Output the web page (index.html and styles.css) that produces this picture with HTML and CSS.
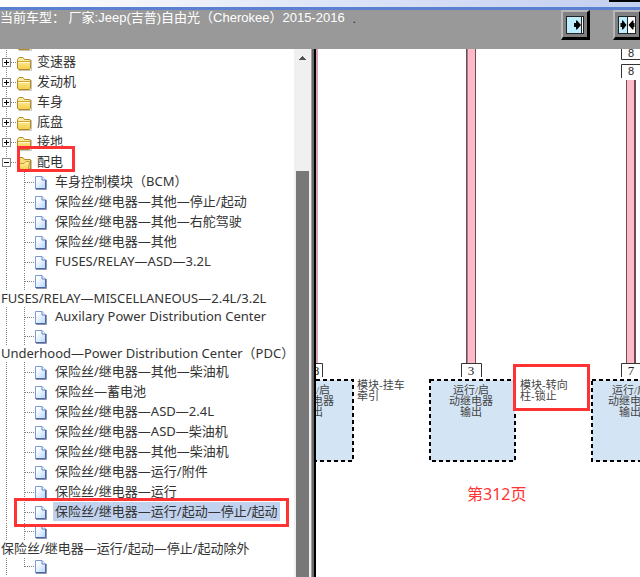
FILE: index.html
```html
<!DOCTYPE html>
<html lang="zh-CN">
<head>
<meta charset="utf-8">
<meta name="viewport" content="width=device-width, initial-scale=1">
<title>Jeep 自由光 电路图</title>
<link rel="stylesheet" href="styles.css">
</head>
<body>
<svg class="defs" aria-hidden="true">
  <defs>
    <linearGradient id="fold" x1="0" y1="0" x2="0" y2="1"><stop offset="0" stop-color="#fff3b0"/><stop offset="1" stop-color="#f7cf48"/></linearGradient>
    <linearGradient id="page" x1="0" y1="0" x2="1" y2="1"><stop offset="0.2" stop-color="#ffffff"/><stop offset="1" stop-color="#b4d6fc"/></linearGradient>
    <symbol id="i-plus" viewBox="0 0 17 20">
      <path class="dots" d="M6.5 0V20M11 10.5H17"/>
      <rect x="2.5" y="6.5" width="8" height="8" fill="#fff" stroke="#848484"/>
      <path d="M4 10.500H9M6.500 8V13" stroke="#000"/>
    </symbol>
    <symbol id="i-minus" viewBox="0 0 17 20">
      <path class="dots" d="M6.5 0V20M11 10.5H17"/>
      <rect x="2.5" y="6.5" width="8" height="8" fill="#fff" stroke="#848484"/>
      <path d="M4 10.500H9" stroke="#000"/>
    </symbol>
    <symbol id="i-folder" viewBox="0 0 16 20">
      <path d="M2 18.500H14.500V8" fill="none" stroke="#c9c5b8"/>
      <path d="M.5 16V7.500L2 5.500H6L7.500 7.500H13L13.500 9V16L12.500 17.500H1.500Z" fill="url(#fold)" stroke="#b08a2c"/>
      <path d="M1 9.500H13" stroke="#d0a53a"/>
      <path d="M2 10.500H12.500" stroke="#fffbd8"/>
    </symbol>
    <symbol id="i-open" viewBox="0 0 16 20">
      <path d="M2 18.500H14.500V8" fill="none" stroke="#c9c5b8"/>
      <path d="M1.500 17V7.500L2.500 5.500H6L7.500 7.500H13.500V17Z" fill="#f7dc78" stroke="#b08a2c"/>
      <path d="M.5 11.500H7L9 9.500H12.500L11.500 17.500H1.500Z" fill="url(#fold)" stroke="#c79b34"/>
    </symbol>
    <symbol id="i-line" viewBox="0 0 17 20">
      <path class="dots" d="M6.5 0V20"/>
    </symbol>
    <symbol id="i-branch" viewBox="0 0 18 20">
      <path class="dots" d="M7.5 0V20M8 10.5H18"/>
    </symbol>
    <symbol id="i-last" viewBox="0 0 18 20">
      <path class="dots" d="M7.5 0V11M8 10.5H18"/>
    </symbol>
    <symbol id="i-file" viewBox="0 0 13 20">
      <path d="M1 17.500H11.500V8" fill="none" stroke="#8f95a8"/>
      <path d="M.5 4.500H7L10.500 8V16.500H.5Z" fill="url(#page)" stroke="#7c9ad2"/>
      <path d="M10.500 8V16.500H.5" fill="none" stroke="#4a66a8"/>
      <path d="M7 4.500V8H10.500" fill="#f6faff" stroke="#5f80c4"/>
    </symbol>
  </defs>
</svg>

<div class="titlebar"><span class="titlebar-box"></span></div>

<header class="toolbar">
  <h1 class="model">当前车型： 厂家:Jeep(吉普)自由光（Cherokee）2015-2016</h1>
  <span class="dot">.</span>
  <div class="tools">
    <button class="tool" type="button" aria-label="展开左侧">
      <svg width="18" height="18" viewBox="0 0 18 18"><rect x=".5" y=".5" width="17" height="17" fill="#fff" stroke="#222"/><path d="M1 1H15V17H1Z" fill="#bdeeff"/><path d="M15.500 1V17" stroke="#222"/><path d="M8 7H10V4.500H11L15 9L11 13.500H10V11H8Z" fill="#000"/></svg>
    </button>
    <button class="tool" type="button" aria-label="左右并排">
      <svg width="18" height="18" viewBox="0 0 18 18"><rect x=".5" y=".5" width="17" height="17" fill="#fff" stroke="#222"/><path d="M1 1H9V17H1Z" fill="#bdeeff"/><path d="M9.500 1V17" stroke="#222"/><path d="M2.500 7H4V4.500H5L8.500 9L5 13.500H4V11H2.500ZM16.500 7H15.500V4.500H14.500L10.500 9L14.500 13.500H15.500V11H16.500Z" fill="#000"/></svg>
    </button>
  </div>
</header>

<main class="panes">
  <nav class="tree" aria-label="系统目录">
    <ul>
      <li class="row row-cut"><svg class="guide"><use href="#i-line"/></svg><svg class="folder"><use href="#i-folder"/></svg></li>
      <li class="row"><button class="toggle" type="button" aria-label="展开"><svg class="guide"><use href="#i-plus"/></svg></button><svg class="folder"><use href="#i-folder"/></svg><a class="name" href="#">变速器</a></li>
      <li class="row"><button class="toggle" type="button" aria-label="展开"><svg class="guide"><use href="#i-plus"/></svg></button><svg class="folder"><use href="#i-folder"/></svg><a class="name" href="#">发动机</a></li>
      <li class="row"><button class="toggle" type="button" aria-label="展开"><svg class="guide"><use href="#i-plus"/></svg></button><svg class="folder"><use href="#i-folder"/></svg><a class="name" href="#">车身</a></li>
      <li class="row"><button class="toggle" type="button" aria-label="展开"><svg class="guide"><use href="#i-plus"/></svg></button><svg class="folder"><use href="#i-folder"/></svg><a class="name" href="#">底盘</a></li>
      <li class="row"><button class="toggle" type="button" aria-label="展开"><svg class="guide"><use href="#i-plus"/></svg></button><svg class="folder"><use href="#i-folder"/></svg><a class="name" href="#">接地</a></li>
      <li>
        <div class="row"><button class="toggle" type="button" aria-label="折叠"><svg class="guide"><use href="#i-minus"/></svg></button><svg class="folder"><use href="#i-open"/></svg><a class="name" href="#">配电</a><span class="mark mark-folder"></span></div>
        <ul>
          <li class="row"><svg class="guide"><use href="#i-line"/></svg><svg class="branch"><use href="#i-branch"/></svg><svg class="file"><use href="#i-file"/></svg><a class="name leaf" href="#">车身控制模块（BCM）</a></li>
          <li class="row"><svg class="guide"><use href="#i-line"/></svg><svg class="branch"><use href="#i-branch"/></svg><svg class="file"><use href="#i-file"/></svg><a class="name leaf" href="#">保险丝/继电器—其他—停止/起动</a></li>
          <li class="row"><svg class="guide"><use href="#i-line"/></svg><svg class="branch"><use href="#i-branch"/></svg><svg class="file"><use href="#i-file"/></svg><a class="name leaf" href="#">保险丝/继电器—其他—右舵驾驶</a></li>
          <li class="row"><svg class="guide"><use href="#i-line"/></svg><svg class="branch"><use href="#i-branch"/></svg><svg class="file"><use href="#i-file"/></svg><a class="name leaf" href="#">保险丝/继电器—其他</a></li>
          <li class="row"><svg class="guide"><use href="#i-line"/></svg><svg class="branch"><use href="#i-branch"/></svg><svg class="file"><use href="#i-file"/></svg><a class="name leaf" href="#">FUSES/RELAY—ASD—3.2L</a></li>
          <li><div class="row row-short"><svg class="guide"><use href="#i-line"/></svg><svg class="branch"><use href="#i-branch"/></svg><svg class="file"><use href="#i-file"/></svg></div><a class="name wrapped" href="#">FUSES/RELAY—MISCELLANEOUS—2.4L/3.2L</a></li>
          <li class="row"><svg class="guide"><use href="#i-line"/></svg><svg class="branch"><use href="#i-branch"/></svg><svg class="file"><use href="#i-file"/></svg><a class="name leaf" href="#">Auxilary Power Distribution Center</a></li>
          <li><div class="row row-short"><svg class="guide"><use href="#i-line"/></svg><svg class="branch"><use href="#i-branch"/></svg><svg class="file"><use href="#i-file"/></svg></div><a class="name wrapped" href="#">Underhood—Power Distribution Center（PDC）</a></li>
          <li class="row"><svg class="guide"><use href="#i-line"/></svg><svg class="branch"><use href="#i-branch"/></svg><svg class="file"><use href="#i-file"/></svg><a class="name leaf" href="#">保险丝/继电器—其他—柴油机</a></li>
          <li class="row"><svg class="guide"><use href="#i-line"/></svg><svg class="branch"><use href="#i-branch"/></svg><svg class="file"><use href="#i-file"/></svg><a class="name leaf" href="#">保险丝—蓄电池</a></li>
          <li class="row"><svg class="guide"><use href="#i-line"/></svg><svg class="branch"><use href="#i-branch"/></svg><svg class="file"><use href="#i-file"/></svg><a class="name leaf" href="#">保险丝/继电器—ASD—2.4L</a></li>
          <li class="row"><svg class="guide"><use href="#i-line"/></svg><svg class="branch"><use href="#i-branch"/></svg><svg class="file"><use href="#i-file"/></svg><a class="name leaf" href="#">保险丝/继电器—ASD—柴油机</a></li>
          <li class="row"><svg class="guide"><use href="#i-line"/></svg><svg class="branch"><use href="#i-branch"/></svg><svg class="file"><use href="#i-file"/></svg><a class="name leaf" href="#">保险丝/继电器—其他—柴油机</a></li>
          <li class="row"><svg class="guide"><use href="#i-line"/></svg><svg class="branch"><use href="#i-branch"/></svg><svg class="file"><use href="#i-file"/></svg><a class="name leaf" href="#">保险丝/继电器—运行/附件</a></li>
          <li class="row"><svg class="guide"><use href="#i-line"/></svg><svg class="branch"><use href="#i-branch"/></svg><svg class="file"><use href="#i-file"/></svg><a class="name leaf" href="#">保险丝/继电器—运行</a></li>
          <li class="row"><svg class="guide"><use href="#i-line"/></svg><svg class="branch"><use href="#i-branch"/></svg><svg class="file"><use href="#i-file"/></svg><a class="name leaf selected" href="#" aria-current="true">保险丝/继电器—运行/起动—停止/起动</a><span class="mark mark-leaf"></span></li>
          <li><div class="row row-short"><svg class="guide"><use href="#i-line"/></svg><svg class="branch"><use href="#i-branch"/></svg><svg class="file"><use href="#i-file"/></svg></div><a class="name wrapped" href="#">保险丝/继电器—运行/起动—停止/起动除外</a></li>
          <li class="row row-short"><svg class="guide"><use href="#i-line"/></svg><svg class="branch"><use href="#i-last"/></svg><svg class="file"><use href="#i-file"/></svg></li>
        </ul>
      </li>
    </ul>
  </nav>
  <div class="scrollbar" aria-hidden="true">
    <svg class="scroll-up" width="7" height="4" viewBox="0 0 7 4"><path d="M3 0H4V1H5V2H6V3H7V4H0V3H1V2H2V1H3Z" fill="#505050"/></svg>
    <div class="thumb"></div>
  </div>
  <div class="splitter"></div>
  <section class="diagram" aria-label="电路图">
    <svg class="canvas">
      <g transform="translate(-316 -49)">
        <!-- wires -->
        <rect x="315" y="40" width="3" height="324" fill="#d9a3b0"/>
        <rect x="466" y="40" width="10" height="324" fill="#6b4b55"/><rect x="467" y="40" width="1" height="324" fill="#9a8089"/><rect x="468" y="40" width="7" height="324" fill="#ffb9c7"/>
        <rect x="626" y="80" width="10" height="284" fill="#6b4b55"/><rect x="627" y="80" width="7" height="284" fill="#ffb9c7"/>
        <!-- module boxes -->
        <g class="module">
          <rect x="267" y="380" width="86" height="81"/>
          <rect x="430" y="380" width="85" height="81"/>
          <rect x="592" y="380" width="86" height="81"/>
        </g>
        <!-- connector pins -->
        <g class="pin">
          <path d="M302.500 377V363.500H322.500V377"/>
          <path d="M461.500 377V363.500H481.500V377"/>
          <path d="M621.500 377V363.500H641.500V377"/>
          <path d="M621.500 40V59.500H641.500V40"/>
          <path d="M621.500 78V64.500H641.500V78"/>
        </g>
        <g class="pin-no">
          <text x="316" y="375">8</text>
          <text x="471" y="375">3</text>
          <text x="631" y="375">7</text>
        </g>
        <g class="pin-no sans">
          <text x="631" y="57">8</text>
          <text x="631" y="75">8</text>
        </g>
        <g class="cjk mid">
          <text x="312" y="394">运行/启</text><text x="312" y="405">动继电器</text><text x="312" y="416">输出</text>
          <text x="471" y="394">运行/启</text><text x="471" y="405">动继电器</text><text x="471" y="416">输出</text>
          <text x="630" y="394">运行/启</text><text x="630" y="405">动继电器</text><text x="630" y="416">输出</text>
        </g>
        <g class="cjk">
          <text x="357" y="389">模块-挂车</text><text x="357" y="400">牵引</text>
        </g>
        <rect class="callout" x="514.500" y="365.500" width="74" height="44"/>
        <g class="cjk">
          <text x="520" y="389">模块-转向</text><text x="520" y="400">柱-锁止</text>
        </g>
        <text class="page-no" x="467" y="500">第312页</text>
      </g>
    </svg>
  </section>
</main>
</body>
</html>
```
FILE: styles.css
```css
* {
  box-sizing: border-box;
}

body {
  margin: 0;
  height: 100vh;
  display: flex;
  flex-direction: column;
  overflow: hidden;
  background: #fff;
  color: #333;
  font: 13px/20px "Noto Sans", "Noto Sans CJK SC", sans-serif;
}

.defs {
  position: absolute;
  width: 0;
  height: 0;
}

.titlebar {
  flex: none;
  display: flex;
  justify-content: flex-end;
  height: 10px;
  background: linear-gradient(90deg, #fff 0, #f4f6fc 20%, #dfe5f8 50%, #c3cff0 100%);
  border-bottom: 3px solid #5b80d2;
}

.titlebar-box {
  width: 31px;
  height: 2px;
  background: #000;
}

.toolbar {
  flex: none;
  display: flex;
  height: 39px;
  background: #999;
  color: #fff;
  overflow: hidden;
}

.model {
  margin: 0;
  font: 13px/15px "Liberation Sans", "Noto Sans CJK SC", sans-serif;
  white-space: pre;
}

.dot {
  padding-left: 8px;
  color: #333;
  font: 13px/18px "Liberation Sans", sans-serif;
}

.tools {
  display: flex;
  gap: 23px;
  margin-left: auto;
  margin-right: -2px;
}

.tool {
  display: flex;
  align-items: center;
  justify-content: center;
  width: 29px;
  height: 30px;
  padding: 0;
  background: #808080;
  border: 2px solid;
  border-color: #b8b8b8 #000 #000 #b8b8b8;
  border-right-width: 3px;
  border-bottom-width: 3px;
}

.panes {
  flex: 1;
  display: flex;
  min-height: 0;
}

.tree {
  flex: none;
  width: 294px;
  white-space: nowrap;
}

.tree > ul {
  height: 100%;
  overflow: hidden;
}

.tree ul {
  margin: 0;
  padding: 0;
  list-style: none;
}

.row {
  position: relative;
  display: flex;
  align-items: center;
  height: 20px;
}

.row-cut {
  height: 3px;
  align-items: flex-end;
  overflow: hidden;
}

.row-short {
  height: 18px;
  overflow: hidden;
}

.toggle {
  display: flex;
  padding: 0;
  border: 0;
  background: none;
}

.row svg {
  flex: none;
  height: 20px;
}

.guide {
  width: 17px;
}

.folder {
  width: 16px;
}

.branch {
  width: 18px;
}

.file {
  width: 13px;
}

.dots {
  fill: none;
  stroke: #808080;
  stroke-dasharray: 1 1;
  shape-rendering: crispEdges;
}

.name {
  margin-left: 2px;
  margin-bottom: 2px;
  padding: 0 2px;
  line-height: 19px;
  color: #333;
  text-decoration: none;
}

.leaf {
  margin-left: 5px;
}

.wrapped {
  display: block;
  margin: 0;
  padding: 0 1px;
  height: 17px;
  line-height: 17px;
}

.selected {
  background: #c1d2ee;
}

.mark {
  position: absolute;
  z-index: 1;
  border: 3px solid #f33;
  pointer-events: none;
}

.mark-folder {
  left: 17px;
  top: -6px;
  width: 58px;
  height: 26px;
}

.mark-leaf {
  left: 14px;
  top: -4px;
  width: 275px;
  height: 29px;
}

.scrollbar {
  flex: none;
  display: flex;
  flex-direction: column;
  align-items: center;
  width: 17px;
  padding-top: 7px;
  background: #f0f0f0;
}

.scroll-up {
  flex: none;
}

.thumb {
  flex: 1;
  width: 13px;
  margin-top: 111px;
  background: #787878;
}

.splitter {
  flex: none;
  width: 5px;
  border-left: 1px solid #a0a0a0;
  border-right: 2px solid #000;
  background: #696969;
}

.diagram {
  flex: 1;
  min-width: 0;
  overflow: hidden;
}

.canvas {
  display: block;
  width: 100%;
  height: 100%;
}

.module rect {
  fill: #d3e5f5;
  stroke: #000;
  stroke-width: 2px;
  stroke-dasharray: 4 3;
}

.pin path {
  fill: #fff;
  stroke: #333;
}

.pin-no {
  font: 13px "Liberation Serif", serif;
  fill: #222;
  text-anchor: middle;
}

.sans {
  font: 11px "Liberation Sans", sans-serif;
}

.cjk {
  font: 11px "Liberation Serif", "Noto Sans CJK SC", sans-serif;
  fill: #444;
}

.mid {
  text-anchor: middle;
}

.callout {
  fill: none;
  stroke: #f33;
  stroke-width: 3px;
}

.page-no {
  font: 16px "Noto Sans", "Noto Sans CJK SC", sans-serif;
  fill: #f33;
}
```
